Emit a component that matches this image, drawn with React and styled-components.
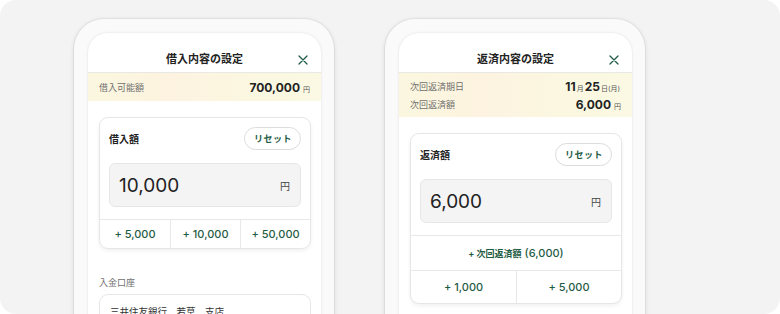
import React from 'react';
import styled, { createGlobalStyle } from 'styled-components';

const GlobalStyle = createGlobalStyle`
  body {
    margin: 0;
    background: #ffffff;
    font-family: "Inter", "Noto Sans CJK JP", sans-serif;
    color: #222;
  }
`;

const green = '#1f5c45';

const Canvas = styled.div`
  width: 780px;
  height: 314px;
  box-sizing: border-box;
  background: #f3f3f3;
  border-radius: 16px;
  overflow: hidden;
  display: flex;
  align-items: flex-start;
  gap: 51px;
  padding: 19px 0 0 74px;
`;

const Phone = styled.div`
  width: 260px;
  height: 340px;
  box-sizing: border-box;
  padding: 14px 13px 0 14px;
  background: #fafafa;
  border-radius: 30px;
  box-shadow: 0 0 0 1px rgba(0, 0, 0, 0.04), 0 1px 5px rgba(0, 0, 0, 0.12);
`;

const Screen = styled.div`
  height: 100%;
  background: #fff;
  border-radius: 20px 20px 0 0;
  box-shadow: 0 0 3px rgba(0, 0, 0, 0.1);
  overflow: hidden;
`;

const Header = styled.div`
  position: relative;
  height: 40px;
  box-sizing: border-box;
  padding-top: 19px;
  text-align: center;
  font-size: 11px;
  font-weight: 700;
  line-height: 14px;
  color: #222;
  border-bottom: 1px solid #e8e8e4;
`;

const Close = styled.svg`
  position: absolute;
  right: 13px;
  top: 22px;
`;

const Band = styled.div`
  background: linear-gradient(90deg, #fbf7df 0%, #fdf3e0 35%, #fbf7e1 70%, #fbf9e3 100%);
  padding: ${p => (p.$rows > 1 ? '4px 11px 4px' : '5px 11px')};
`;

const BandRow = styled.div`
  display: flex;
  align-items: center;
  justify-content: space-between;
  height: 18px;
`;

const BandLabel = styled.span`
  font-size: 9px;
  color: #6f6f6f;
`;

const BandValue = styled.span`
  font-size: 12px;
  font-weight: 700;
  color: #222;
  display: flex;
  align-items: baseline;
`;

const Unit = styled.span`
  font-size: 7px;
  font-weight: 400;
  color: #555;
  margin: 0 ${p => (p.$tight ? '1px' : '0')} 0 ${p => (p.$tight ? '1px' : '3px')};
`;

const Body = styled.div`
  padding: 16px 10px 0 11px;
`;

const Card = styled.div`
  border: 1px solid #e6e6e6;
  border-radius: 9px;
  background: #fff;
  box-shadow: 0 2px 4px rgba(0, 0, 0, 0.06);
  overflow: hidden;
`;

const CardTop = styled.div`
  padding: 9px 9px 12px 9px;
`;

const TitleRow = styled.div`
  display: flex;
  align-items: center;
  justify-content: space-between;
`;

const CardTitle = styled.span`
  font-size: 10px;
  font-weight: 700;
  color: #222;
`;

const ResetButton = styled.button`
  height: 23px;
  padding: 0 8px 0 9px;
  border: 1px solid #dcdcdc;
  border-radius: 12px;
  background: #fff;
  font-family: inherit;
  font-size: 9px;
  font-weight: 700;
  letter-spacing: 0.5px;
  color: ${green};
`;

const AmountBox = styled.div`
  margin-top: 13px;
  height: 44px;
  box-sizing: border-box;
  border: 1px solid #e6e6e6;
  border-radius: 6px;
  background: #f4f4f4;
  display: flex;
  align-items: center;
  justify-content: space-between;
  padding: 0 10px 0 9px;
`;

const Amount = styled.span`
  font-size: 19px;
  color: #222;
`;

const Yen = styled.span`
  font-size: 10px;
  color: #444;
`;

const AddRow = styled.div`
  display: grid;
  grid-template-columns: repeat(${p => p.$cols}, 1fr);
  border-top: 1px solid #e8e8e8;
  height: ${p => p.$h}px;
`;

const AddButton = styled.div`
  display: flex;
  align-items: center;
  justify-content: center;
  font-size: 11px;
  font-weight: 500;
  color: ${green};
  & + & {
    border-left: 1px solid #e8e8e8;
  }
`;

const Small = styled.span`
  font-size: 9px;
  font-weight: 700;
  margin-right: 3px;
`;

const SectionLabel = styled.div`
  margin-top: 27px;
  font-size: 9px;
  color: #6f6f6f;
`;

const AccountBox = styled.div`
  margin-top: 5px;
  border: 1px solid #e6e6e6;
  border-radius: 9px;
  padding: 9px 10px 20px;
  font-size: 9.5px;
  color: #333;
`;

const CloseIcon = () => (
  <Close width="10" height="10" viewBox="0 0 10 10">
    <path d="M1 1 L9 9 M9 1 L1 9" stroke={green} strokeWidth="1.3" strokeLinecap="round" />
  </Close>
);

export default function App() {
  return (
    <>
      <GlobalStyle />
      <Canvas>
        <Phone>
          <Screen>
            <Header>
              借入内容の設定
              <CloseIcon />
            </Header>
            <Band $rows={1}>
              <BandRow>
                <BandLabel>借入可能額</BandLabel>
                <BandValue>
                  700,000<Unit>円</Unit>
                </BandValue>
              </BandRow>
            </Band>
            <Body>
              <Card>
                <CardTop>
                  <TitleRow>
                    <CardTitle>借入額</CardTitle>
                    <ResetButton>リセット</ResetButton>
                  </TitleRow>
                  <AmountBox>
                    <Amount>10,000</Amount>
                    <Yen>円</Yen>
                  </AmountBox>
                </CardTop>
                <AddRow $cols={3} $h={28}>
                  <AddButton>+ 5,000</AddButton>
                  <AddButton>+ 10,000</AddButton>
                  <AddButton>+ 50,000</AddButton>
                </AddRow>
              </Card>
              <SectionLabel>入金口座</SectionLabel>
              <AccountBox>三井住友銀行　若草　支店</AccountBox>
            </Body>
          </Screen>
        </Phone>

        <Phone>
          <Screen>
            <Header>
              返済内容の設定
              <CloseIcon />
            </Header>
            <Band $rows={2}>
              <BandRow>
                <BandLabel>次回返済期日</BandLabel>
                <BandValue>
                  11<Unit $tight>月</Unit>25<Unit $tight>日(月)</Unit>
                </BandValue>
              </BandRow>
              <BandRow>
                <BandLabel>次回返済額</BandLabel>
                <BandValue>
                  6,000<Unit>円</Unit>
                </BandValue>
              </BandRow>
            </Band>
            <Body>
              <Card>
                <CardTop>
                  <TitleRow>
                    <CardTitle>返済額</CardTitle>
                    <ResetButton>リセット</ResetButton>
                  </TitleRow>
                  <AmountBox>
                    <Amount>6,000</Amount>
                    <Yen>円</Yen>
                  </AmountBox>
                </CardTop>
                <AddRow $cols={1} $h={34}>
                  <AddButton>
                    <Small>+ 次回返済額</Small>(6,000)
                  </AddButton>
                </AddRow>
                <AddRow $cols={2} $h={32}>
                  <AddButton>+ 1,000</AddButton>
                  <AddButton>+ 5,000</AddButton>
                </AddRow>
              </Card>
            </Body>
          </Screen>
        </Phone>
      </Canvas>
    </>
  );
}
